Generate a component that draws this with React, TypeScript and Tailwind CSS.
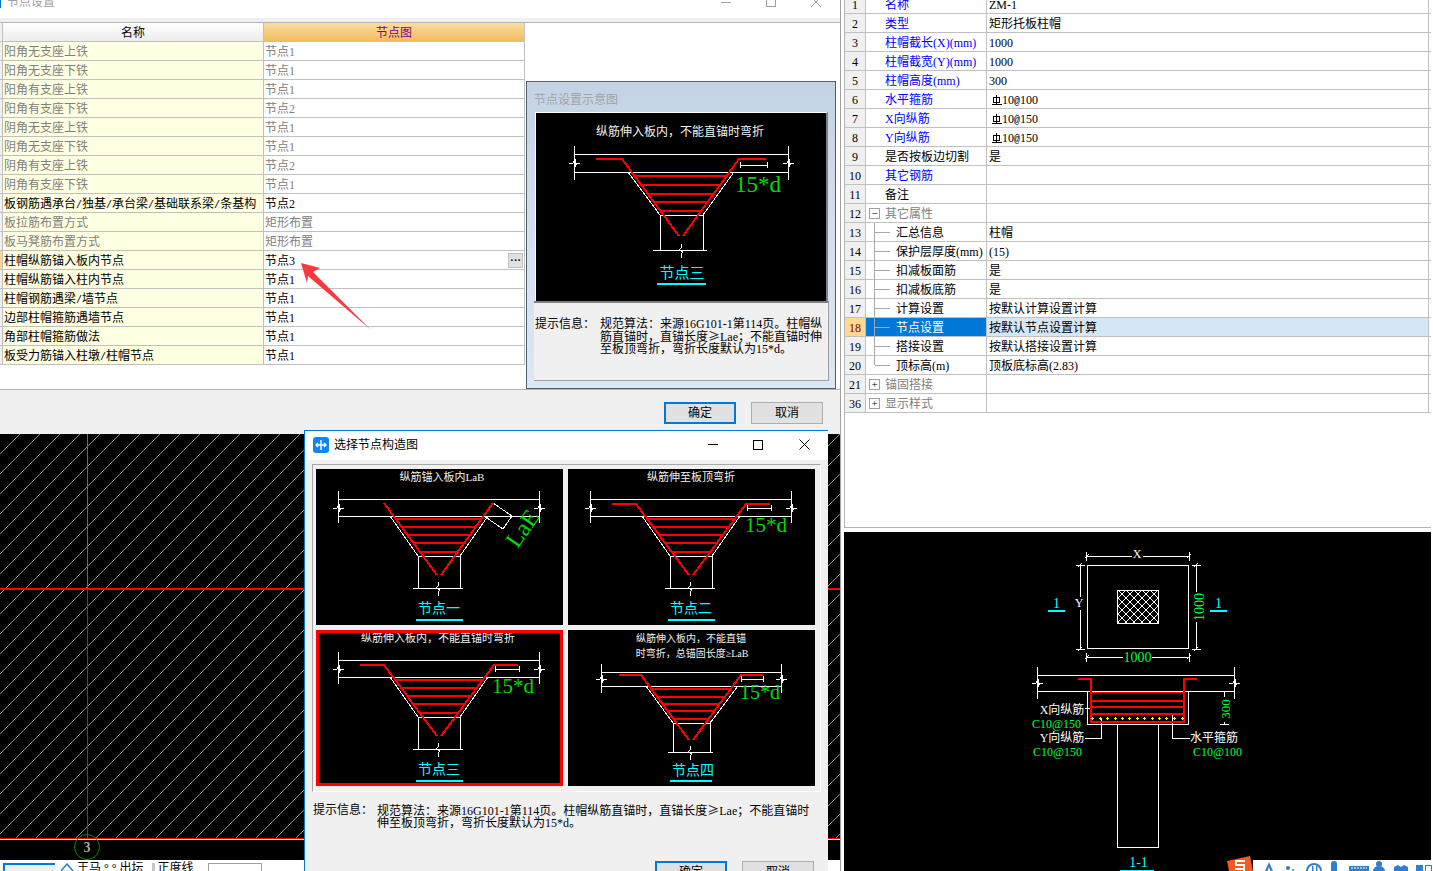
import React from "react";

type Hoop = [number, number, number];

interface Geometry {
  w: number;
  h: number;
  titles: { text: string; x: number; y: number; size: number }[];
  slabTop: number;
  slabBot: number;
  slabL: number;
  slabR: number;
  tickTop: number;
  tickBot: number;
  trapTopL: number;
  trapTopR: number;
  colL: number;
  colR: number;
  colTop: number;
  colBot: number;
  baseL: number;
  baseR: number;
  breakX: number;
  barL: number[];
  barR: number[];
  barY?: number;
  hoops: Hoop[];
  dim?: [number, number, number];
  dimText?: { x: number; y: number; size: number };
  label: string;
  labelX: number;
  labelY: number;
  labelSize: number;
  under: [number, number, number];
  lae?: boolean;
}

const hoopsA: Hoop[] = [
  [50, 79, 166],
  [58, 86, 161],
  [66, 91, 156],
  [74, 97, 150],
  [83, 103, 143],
];

const dialogBase = {
  w: 247,
  h: 156,
  slabTop: 30,
  slabBot: 47,
  slabL: 22,
  slabR: 223,
  tickTop: 22,
  tickBot: 54,
  trapTopL: 74,
  trapTopR: 172,
  colL: 102,
  colR: 144,
  colTop: 87,
  colBot: 119,
  baseL: 97,
  baseR: 147,
  breakX: 122,
  hoops: hoopsA,
  labelX: 123,
  labelY: 139,
  labelSize: 14,
  under: [100, 147, 151] as [number, number, number],
};

const node1: Geometry = {
  ...dialogBase,
  titles: [{ text: "纵筋锚入板内LaB", x: 126, y: 8, size: 11 }],
  barL: [68, 68, 121, 106],
  barR: [177, 177, 125, 106],
  barY: 34,
  label: "节点一",
  lae: true,
};

const node2: Geometry = {
  ...dialogBase,
  titles: [{ text: "纵筋伸至板顶弯折", x: 123, y: 8, size: 11 }],
  barL: [44, 68, 121, 106],
  barR: [202, 178, 125, 106],
  barY: 35,
  dim: [179, 203, 39],
  dimText: { x: 198, y: 56, size: 21 },
  label: "节点二",
};

const node3: Geometry = {
  ...dialogBase,
  titles: [{ text: "纵筋伸入板内，不能直锚时弯折", x: 122, y: 8, size: 11 }],
  barL: [44, 68, 121, 106],
  barR: [202, 178, 125, 106],
  barY: 35,
  dim: [179, 203, 39],
  dimText: { x: 197, y: 56, size: 21 },
  label: "节点三",
};

const node4: Geometry = {
  w: 247,
  h: 156,
  titles: [
    { text: "纵筋伸入板内，不能直锚", x: 123, y: 8, size: 10 },
    { text: "时弯折，总锚固长度≥LaB", x: 124, y: 23, size: 10 },
  ],
  slabTop: 42,
  slabBot: 56,
  slabL: 33,
  slabR: 213,
  tickTop: 34,
  tickBot: 63,
  trapTopL: 78,
  trapTopR: 170,
  colL: 105,
  colR: 142,
  colTop: 93,
  colBot: 122,
  baseL: 100,
  baseR: 145,
  breakX: 122,
  barL: [51, 73, 121, 110],
  barR: [195, 173, 125, 110],
  barY: 45,
  hoops: [
    [59, 83, 163],
    [67, 89, 157],
    [74, 95, 151],
    [81, 100, 146],
    [89, 106, 140],
  ],
  dim: [173, 195, 49],
  dimText: { x: 192, y: 62, size: 20 },
  label: "节点四",
  labelX: 125,
  labelY: 140,
  labelSize: 14,
  under: [102, 144, 151],
};

const bigNode: Geometry = {
  w: 291,
  h: 188,
  titles: [{ text: "纵筋伸入板内，不能直锚时弯折", x: 144, y: 19, size: 12 }],
  slabTop: 41,
  slabBot: 59,
  slabL: 38,
  slabR: 252,
  tickTop: 33,
  tickBot: 67,
  trapTopL: 92,
  trapTopR: 198,
  colL: 124,
  colR: 167,
  colTop: 102,
  colBot: 137,
  baseL: 117,
  baseR: 171,
  breakX: 145,
  barL: [60, 86, 143, 123],
  barR: [230, 203, 147, 123],
  barY: 46,
  hoops: [
    [63, 97, 192],
    [72, 106, 184],
    [81, 112, 179],
    [89, 117, 172],
    [98, 124, 166],
  ],
  dim: [204, 231, 52],
  dimText: { x: 222, y: 71, size: 23 },
  label: "节点三",
  labelX: 146,
  labelY: 160,
  labelSize: 15,
  under: [121, 170, 171],
};

// little break symbol on a dimension line
const breakH = (x: number, y: number) => `M${x - 5} ${y}h4l2 -4v8l2 -4h3`;
const breakV = (x: number, y: number) => `M${x} ${y - 6}v4l-2 2 4 2-2 2v4`;

function NodeDrawing({ g }: { g: Geometry }) {
  const mid = Math.round((g.slabTop + g.slabBot) / 2);
  const barY = g.barY ?? 35;
  return (
    <svg width={g.w} height={g.h} viewBox={`0 0 ${g.w} ${g.h}`} className="block bg-black">
      {g.titles.map((t) => (
        <text key={t.text} x={t.x} y={t.y + 4} fontSize={t.size} fill="#f2f2f2" textAnchor="middle">
          {t.text}
        </text>
      ))}
      <g stroke="#fff" fill="none" shapeRendering="crispEdges">
        <path d={`M${g.slabL} ${g.slabTop + 0.5}H${g.slabR}`} />
        <path d={`M${g.slabL} ${g.slabBot + 0.5}H${g.slabR}`} />
        <path d={`M${g.slabL + 0.5} ${g.tickTop}V${g.tickBot}M${g.slabR + 0.5} ${g.tickTop}V${g.tickBot}`} />
        <path d={breakH(g.slabL, mid)} />
        <path d={breakH(g.slabR, mid)} />
        <path d={`M${g.trapTopL} ${g.slabBot}L${g.colL} ${g.colTop}H${g.colR}L${g.trapTopR} ${g.slabBot}`} />
        <path d={`M${g.colL + 0.5} ${g.colTop}V${g.colBot}M${g.colR + 0.5} ${g.colTop}V${g.colBot}`} />
        <path d={`M${g.baseL} ${g.colBot + 0.5}H${g.baseR}`} />
        <path d={breakV(g.breakX, g.colBot)} />
        {g.dim && (
          <path
            d={`M${g.dim[0]} ${g.dim[2] + 0.5}H${g.dim[1]}M${g.dim[0]} ${g.dim[2] - 3}v6M${g.dim[1]} ${g.dim[2] - 3}v6`}
          />
        )}
        {g.lae && <path d="M177 34L196 47M168 47L187 60M196 47L187 60" />}
      </g>
      <g stroke="#ff0000" strokeWidth={2} fill="none" shapeRendering="crispEdges">
        {g.hoops.map(([y, a, b]) => (
          <path key={y} d={`M${a} ${y}H${b}`} />
        ))}
        <path d={`M${g.barL[0]} ${barY}H${g.barL[1]}L${g.barL[2]} ${g.barL[3]}`} />
        <path d={`M${g.barR[0]} ${barY}H${g.barR[1]}L${g.barR[2]} ${g.barR[3]}`} />
      </g>
      {g.dimText && (
        <text
          x={g.dimText.x}
          y={g.dimText.y + g.dimText.size * 0.35}
          fontSize={g.dimText.size}
          fill="#00dc00"
          textAnchor="middle"
        >
          15*d
        </text>
      )}
      {g.lae && (
        <text x={0} y={0} fontSize={24} fill="#00dc00" textAnchor="middle" transform="translate(213 64) rotate(-55)">
          LaE
        </text>
      )}
      <text x={g.labelX} y={g.labelY + 5} fontSize={g.labelSize} fill="#00ffff" textAnchor="middle">
        {g.label}
      </text>
      <path d={`M${g.under[0]} ${g.under[2]}H${g.under[1]}`} stroke="#00ffff" strokeWidth={2} shapeRendering="crispEdges" />
    </svg>
  );
}

const settingRows: { name: string; value: string; muted?: boolean; active?: boolean }[] = [
  { name: "阳角无支座上铁", value: "节点1", muted: true },
  { name: "阳角无支座下铁", value: "节点1", muted: true },
  { name: "阳角有支座上铁", value: "节点1", muted: true },
  { name: "阳角有支座下铁", value: "节点2", muted: true },
  { name: "阴角无支座上铁", value: "节点1", muted: true },
  { name: "阴角无支座下铁", value: "节点1", muted: true },
  { name: "阴角有支座上铁", value: "节点2", muted: true },
  { name: "阴角有支座下铁", value: "节点1", muted: true },
  { name: "板钢筋遇承台/独基/承台梁/基础联系梁/条基构", value: "节点2" },
  { name: "板拉筋布置方式", value: "矩形布置", muted: true },
  { name: "板马凳筋布置方式", value: "矩形布置", muted: true },
  { name: "柱帽纵筋锚入板内节点", value: "节点3", active: true },
  { name: "柱帽纵筋锚入柱内节点", value: "节点1" },
  { name: "柱帽钢筋遇梁/墙节点", value: "节点1" },
  { name: "边部柱帽箍筋遇墙节点", value: "节点1" },
  { name: "角部柱帽箍筋做法", value: "节点1" },
  { name: "板受力筋锚入柱墩/柱帽节点", value: "节点1" },
];

type PropKind = "blue" | "black" | "group" | "child";

const propRows: { no: number; name: string; value?: string; rebar?: [string, string]; kind: PropKind; open?: boolean }[] = [
  { no: 1, name: "名称", value: "ZM-1", kind: "blue" },
  { no: 2, name: "类型", value: "矩形托板柱帽", kind: "blue" },
  { no: 3, name: "柱帽截长(X)(mm)", value: "1000", kind: "blue" },
  { no: 4, name: "柱帽截宽(Y)(mm)", value: "1000", kind: "blue" },
  { no: 5, name: "柱帽高度(mm)", value: "300", kind: "blue" },
  { no: 6, name: "水平箍筋", rebar: ["10", "100"], kind: "blue" },
  { no: 7, name: "X向纵筋", rebar: ["10", "150"], kind: "blue" },
  { no: 8, name: "Y向纵筋", rebar: ["10", "150"], kind: "blue" },
  { no: 9, name: "是否按板边切割", value: "是", kind: "black" },
  { no: 10, name: "其它钢筋", kind: "blue" },
  { no: 11, name: "备注", kind: "black" },
  { no: 12, name: "其它属性", kind: "group", open: true },
  { no: 13, name: "汇总信息", value: "柱帽", kind: "child" },
  { no: 14, name: "保护层厚度(mm)", value: "(15)", kind: "child" },
  { no: 15, name: "扣减板面筋", value: "是", kind: "child" },
  { no: 16, name: "扣减板底筋", value: "是", kind: "child" },
  { no: 17, name: "计算设置", value: "按默认计算设置计算", kind: "child" },
  { no: 18, name: "节点设置", value: "按默认节点设置计算", kind: "child" },
  { no: 19, name: "搭接设置", value: "按默认搭接设置计算", kind: "child" },
  { no: 20, name: "顶标高(m)", value: "顶板底标高(2.83)", kind: "child" },
  { no: 21, name: "锚固搭接", kind: "group" },
  { no: 36, name: "显示样式", kind: "group" },
];

function RebarMark() {
  return (
    <svg width={11} height={10} viewBox="0 0 11 10" className="ml-[2px] shrink-0">
      <path d="M2.5 2.5H8.5V7H2.5ZM5.5 0V9M0.5 9.5H10.5" stroke="#000" fill="none" shapeRendering="crispEdges" />
    </svg>
  );
}

// slashes take a full half-width cell in the reference font
function Slashed({ text }: { text: string }) {
  const parts = text.split("/");
  return (
    <>
      {parts.map((p, i) => (
        <React.Fragment key={p}>
          {i > 0 && <span className="[font-family:'Liberation_Mono',monospace] text-[10px]">/</span>}
          {p}
        </React.Fragment>
      ))}
    </>
  );
}

function Ge() {
  return <span className="[font-family:'Noto_Sans_CJK_SC',sans-serif]">≥</span>;
}

function PropRow({ row }: { row: (typeof propRows)[number] }) {
  const selected = row.no === 18;
  const first = row.no === 1;
  return (
    <div className={`flex border-b border-[#c0c0c0] ${first ? "h-[14px] items-end overflow-hidden" : "h-[19px]"}`}>
      <div
        className={`flex h-[18px] w-[21px] shrink-0 items-center justify-center border-r border-[#c0c0c0] pt-px text-[12px] ${
          selected ? "bg-[#ffd991] text-[#800000]" : "bg-[#f0f0f0] text-black"
        }`}
      >
        {row.no}
      </div>
      <div
        className={`flex h-[18px] w-[121px] shrink-0 items-center border-r border-[#c0c0c0] text-[12px] whitespace-nowrap ${
          selected ? "bg-[#0078d7] text-white" : ""
        } ${row.kind === "blue" ? "pt-px pl-[19px] text-[#0000ff]" : ""} ${row.kind === "black" ? "pt-px pl-[19px] text-black" : ""}`}
      >
        {row.kind === "group" && (
          <>
            <span className="ml-[3px] flex h-[11px] w-[11px] shrink-0 items-center justify-center border border-[#a0a0a0] text-[11px] leading-none text-black">
              {row.open ? "−" : "+"}
            </span>
            <span className="ml-[5px] pt-px text-[#808080]">{row.name}</span>
          </>
        )}
        {row.kind === "child" && (
          <>
            <span className={`ml-[8px] w-px shrink-0 self-start bg-[#a8a8a8] ${row.no === 20 ? "h-[9px]" : "h-[19px]"}`} />
            <span className="h-px w-[15px] shrink-0 bg-[#a8a8a8]" />
            <span className={`ml-[6px] pt-px ${selected ? "text-white" : "text-black"}`}>{row.name}</span>
          </>
        )}
        {(row.kind === "blue" || row.kind === "black") && row.name}
      </div>
      <div
        className={`flex h-[18px] w-[442px] shrink-0 items-center border-r border-[#c0c0c0] pt-px pl-[2px] text-[12px] whitespace-pre text-black ${
          selected ? "bg-[#d5e6f7]" : ""
        }`}
      >
        {row.value}
        {row.rebar && (
          <>
            <RebarMark />
            <span>
              {row.rebar[0]}
              <span className="[font-family:'Liberation_Mono',monospace] text-[10px]">@</span>
              {row.rebar[1]}
            </span>
          </>
        )}
      </div>
    </div>
  );
}

function DialogButton({ label, primary }: { label: string; primary?: boolean }) {
  return (
    <button
      className={`flex h-[22px] w-[72px] items-center justify-center bg-[#e1e1e1] text-[12px] text-black ${
        primary ? "border-2 border-[#0078d7]" : "border border-[#adadad]"
      }`}
    >
      {label}
    </button>
  );
}

const hatchStarts = Array.from({ length: 64 }, (_, i) => -404 + i * 20);

function CanvasDrawing() {
  return (
    <svg width={840} height={426} viewBox="0 434 840 426" className="block">
      <g stroke="#b0b0b0" strokeWidth={0.8}>
        {hatchStarts.map((x) => (
          <path key={x} d={`M${x} 838L${x + 404} 434`} />
        ))}
      </g>
      <g strokeWidth={1} shapeRendering="crispEdges" fill="none">
        <path d="M87.5 434V588" stroke="#686868" />
        <path d="M87.5 590V838" stroke="#ff0000" />
        <path d="M0 589H840" stroke="#ff0000" strokeWidth={2} />
        <path d="M0 838.5H840" stroke="#ff0000" />
        <path d="M0 839.5H840" stroke="#ffffff" />
      </g>
      <circle cx={87} cy={847} r={12.5} stroke="#0b8a0b" fill="none" />
      <path d="M87 859V860" stroke="#0b8a0b" />
      <text x={87} y={852} fontSize={14} fontWeight={700} fill="#a8a8a8" textAnchor="middle">
        3
      </text>
    </svg>
  );
}

const yellowX = [1092, 1100, 1107, 1115, 1122, 1129, 1137, 1144, 1152, 1159, 1166, 1174, 1182];

function SectionDrawing() {
  const dimTicks = (x: number, y: number) => `M${x - 2} ${y + 2}L${x + 2} ${y - 2}`;
  return (
    <svg width={587} height={339} viewBox="844 532 587 339" className="block bg-black">
      <defs>
        <pattern id="cross" patternUnits="userSpaceOnUse" width={8} height={8} x={1118} y={590}>
          <path d="M0 0L8 8M8 0L0 8" stroke="#fff" strokeWidth={1} />
        </pattern>
      </defs>
      <g stroke="#fff" fill="none" shapeRendering="crispEdges">
        <rect x={1087.5} y={565.5} width={101} height={83} />
        <rect x={1117.5} y={590.5} width={41} height={33} fill="url(#cross)" />
        <path d="M1087 556.5H1132M1143 556.5H1190M1086.5 552V561M1189.5 552V561" />
        <path d={dimTicks(1087, 556) + dimTicks(1189, 556)} />
        <path d="M1080.5 564V597M1080.5 610V650M1076 565H1085M1076 649H1085" />
        <path d={dimTicks(1080, 565) + dimTicks(1080, 649)} />
        <path d="M1196.5 564V592M1196.5 622V650M1192 565H1201M1192 649H1201" />
        <path d={dimTicks(1196, 565) + dimTicks(1196, 649)} />
        <path d="M1087 657.5H1123M1152 657.5H1190M1086.5 653V662M1189.5 653V662" />
        <path d={dimTicks(1087, 657) + dimTicks(1189, 657)} />
        <path d="M1037 675.5H1235M1037 691.5H1235M1037.5 667V699M1234.5 667V699" />
        <path d={breakH(1037, 683) + breakH(1234, 683)} />
        <path d="M1087.5 691V724.5H1188.5V691" />
        <path d="M1117.5 724V847.5H1158.5V724" />
        <path d="M1224.5 691V697M1224.5 722V725M1220 724.5H1229" />
        <path d="M1085 708.5H1091" />
        <path d="M1085 738.5H1101.5V718" />
        <path d="M1190 738.5H1172.5V713" />
      </g>
      <g stroke="#ff0000" strokeWidth={2} fill="none" shapeRendering="crispEdges">
        <path d="M1078 679H1091V722H1184V679H1197" />
        <path d="M1091 701H1184M1091 707H1184M1091 714H1184" />
      </g>
      <path d="M1091 692.5H1184" stroke="#ff0000" strokeWidth={1.5} shapeRendering="crispEdges" />
      <g stroke="#ffff00" shapeRendering="crispEdges">
        {yellowX.map((x) => (
          <path key={x} d={`M${x - 1} 718.5H${x + 2}M${x + 0.5} 717V720`} />
        ))}
      </g>
      <g fontSize={12} textAnchor="middle" fill="#fff">
        <text x={1137} y={558}>X</text>
        <text x={1079} y={607}>Y</text>
        <text x={1062} y={714}>X向纵筋</text>
        <text x={1062} y={742}>Y向纵筋</text>
        <text x={1214} y={742}>水平箍筋</text>
      </g>
      <g fontSize={14} fill="#00ff3c" textAnchor="middle">
        <text x={1137.5} y={662}>1000</text>
        <text transform="translate(1204 607) rotate(-90)">1000</text>
      </g>
      <text transform="translate(1230 709) rotate(-90)" fontSize={13} fill="#00ff3c" textAnchor="middle">
        300
      </text>
      <g fontSize={13} fill="#00ff3c">
        <text x={1032} y={728} textLength={49} lengthAdjust="spacingAndGlyphs">C10@150</text>
        <text x={1033} y={756} textLength={49} lengthAdjust="spacingAndGlyphs">C10@150</text>
        <text x={1193} y={756} textLength={49} lengthAdjust="spacingAndGlyphs">C10@100</text>
      </g>
      <g fontSize={14} fill="#00ffff" textAnchor="middle">
        <text x={1056.5} y={608}>1</text>
        <text x={1218.5} y={608}>1</text>
        <text x={1138.5} y={867}>1-1</text>
      </g>
      <path
        d="M1048 610.5H1065M1210 610.5H1227M1120 870.5H1154"
        stroke="#00ffff"
        strokeWidth={2}
        shapeRendering="crispEdges"
      />
    </svg>
  );
}

function ImeBar() {
  return (
    <div className="absolute right-[1px] bottom-0 flex h-[15px] w-[205px] items-end overflow-hidden">
      <svg width={26} height={15} viewBox="0 0 26 15" className="shrink-0">
        <path d="M0 5L23 0L26 15H2Z" fill="#f25a22" />
        <path d="M18 5H9V9H17V15M8 13H17" stroke="#fff" strokeWidth={2} fill="none" />
      </svg>
      <div className="h-[11px] flex-1 bg-white">
        <svg width={179} height={11} viewBox="1252 860 179 11" className="block">
          <g fill="#2f7fd0">
            <path d="M1268 862L1264 871H1266.5L1268 867L1269.5 871H1272Z" />
            <circle cx={1287} cy={868} r={2} />
            <circle cx={1292} cy={870} r={1} />
            <path d="M1305 871A8 8 0 0 1 1321 871H1319A6 6 0 0 0 1307 871Z" />
            <rect x={1311} y={866} width={1.5} height={5} />
            <rect x={1315} y={866} width={1.5} height={5} />
            <path d="M1330 871V864A3 3 0 0 1 1336 864V871Z" />
            <path d="M1348 866H1368V871H1348Z" />
            <circle cx={1378} cy={864} r={3} />
            <path d="M1372 871A6 5 0 0 1 1384 871Z" />
            <path d="M1393 867L1397 865L1400 867L1403 865L1407 867V871H1393Z" />
            <rect x={1415} y={865} width={7} height={6} />
          </g>
          <rect x={1424.5} y={865.5} width={6} height={6} fill="none" stroke="#2f7fd0" />
          <path d="M1350 868H1366" stroke="#fff" strokeDasharray="2 1" />
        </svg>
      </div>
    </div>
  );
}

export default function App() {
  return (
    <div className="relative flex h-[871px] w-[1433px] overflow-hidden bg-white text-[12px] text-black [font-family:'Liberation_Serif','Noto_Sans_CJK_SC',serif]">
      {/* left window */}
      <div className="flex h-full w-[841px] shrink-0 flex-col border-r border-[#a0a0a0]">
        <div className="flex h-[18px] shrink-0 items-end overflow-hidden bg-white">
          <span className="mb-[10px] h-[8px] w-[1px] self-start bg-[#0078d7]" />
          <span className="relative top-[-9px] ml-[6px] text-[12px] leading-[14px] text-[#a0a0a0]">节点设置</span>
          <div className="relative top-[-11px] ml-auto flex items-center gap-[35px] pr-[19px] text-[#a0a0a0]">
            <span className="h-px w-[10px] bg-[#a0a0a0]" />
            <span className="h-[10px] w-[10px] border border-[#a0a0a0]" />
            <svg width={10} height={10} viewBox="0 0 10 10">
              <path d="M0 0L10 10M10 0L0 10" stroke="#a0a0a0" />
            </svg>
          </div>
        </div>
        <div className="h-[4px] shrink-0 bg-[#f0f0f0]" />
        <div className="flex h-[368px] shrink-0 border-t border-b border-[#b4b4b4] bg-white pr-[4px]">
          <div className="w-[525px] shrink-0">
            <div className="flex h-[19px] border-b border-[#c0c0c0]">
              <div className="w-[3px] border-r border-[#c0c0c0] bg-[#f0f0f0]" />
              <div className="flex w-[261px] items-center justify-center border-r border-[#c0c0c0] bg-gradient-to-b from-white to-[#ececec] pt-px">
                名称
              </div>
              <div className="flex w-[261px] items-center justify-center border-r border-[#c0c0c0] bg-gradient-to-b from-[#fbdc9f] to-[#f3bd5e] pt-px text-[#800080]">
                节点图
              </div>
            </div>
            {settingRows.map((row) => (
              <div key={row.name} className="flex h-[19px] border-b border-[#c0c0c0]">
                <div className={`w-[3px] border-r border-[#c0c0c0] ${row.active ? "bg-[#ffd991]" : "bg-[#f0f0f0]"}`} />
                <div
                  className={`flex w-[261px] items-center overflow-hidden border-r border-[#c0c0c0] bg-[#ffffe1] pt-px pl-[1px] whitespace-pre ${
                    row.muted ? "text-[#808080]" : "text-black"
                  }`}
                >
                  <span>
                    <Slashed text={row.name} />
                  </span>
                </div>
                <div
                  className={`flex w-[261px] items-center justify-between border-r border-[#c0c0c0] pl-[1px] ${
                    row.muted ? "text-[#808080]" : "text-black"
                  }`}
                >
                  <span className="pt-px">{row.value}</span>
                  {row.active && (
                    <span className="mr-[1px] flex h-[15px] w-[15px] items-center justify-center border border-[#c0c0c0] bg-[#e1e1e1] text-[11px] leading-none font-bold">
                      ···
                    </span>
                  )}
                </div>
              </div>
            ))}
          </div>
          {/* preview */}
          <div className="mt-[58px] ml-[1px] h-[308px] w-[310px] shrink-0 border border-[#555e66] bg-gradient-to-b from-[#c3d3e3] via-[#d3e0ee] to-[#dce7f4] px-[7px]">
            <div className="flex h-[30px] items-end pb-[3px] text-[#a3a3a3]">节点设置示意图</div>
            <div className="ml-[1px] h-[189px] w-[293px] overflow-hidden border-t border-l border-white border-r-2 border-r-[#808080]">
              <NodeDrawing g={bigNode} />
            </div>
            <div className="flex h-[80px] w-[295px] items-start border-t-2 border-r border-b border-[#a0a0a0] border-t-[#808080] bg-[#f0f0f0] pt-[15px] pl-[1px] leading-[12px]">
              <span className="w-[65px] shrink-0">提示信息：</span>
              <div className="whitespace-nowrap">
                <div>规范算法：来源16G101-1第114页。柱帽纵</div>
                <div>
                  筋直锚时，直锚长度
                  <Ge />
                  Lae；不能直锚时伸
                </div>
                <div>至板顶弯折，弯折长度默认为15*d。</div>
              </div>
            </div>
          </div>
        </div>
        <div className="flex h-[44px] shrink-0 items-start justify-end gap-[15px] bg-[#f0f0f0] pt-[12px] pr-[17px]">
          <DialogButton label="确定" primary />
          <DialogButton label="取消" />
        </div>
        <div className="h-[426px] shrink-0 bg-black">
          <CanvasDrawing />
        </div>
        <div className="flex h-[11px] flex-1 items-start overflow-hidden bg-white pt-[3px] pl-[3px] text-[12px]">
          <span className="h-[14px] w-[52px] shrink-0 border-t-2 border-l-2 border-[#0078d7] bg-[#e8f2fb]" />
          <svg width={14} height={10} viewBox="0 0 14 10" className="ml-[5px] shrink-0">
            <path d="M1 8L7 1L13 8" fill="none" stroke="#2f7fd0" strokeWidth={1.5} />
          </svg>
          <span className="ml-[3px] shrink-0 leading-[10px] whitespace-nowrap">王马 ° ° 出坛</span>
          <span className="ml-[8px] h-[8px] w-[3px] shrink-0 bg-[#c8c8c8]" />
          <span className="ml-[3px] shrink-0 leading-[10px] whitespace-nowrap">正度线</span>
          <span className="ml-[14px] h-[14px] w-[54px] shrink-0 border border-[#a0a0a0]" />
        </div>
      </div>

      {/* right panel */}
      <div className="flex h-full flex-1 flex-col pr-[2px] pl-[3px]">
        <div className="h-[528px] shrink-0 border-b border-l border-[#b4b4b4]">
          {propRows.map((row) => (
            <PropRow key={row.no} row={row} />
          ))}
        </div>
        <div className="mt-[4px] flex-1 overflow-hidden">
          <SectionDrawing />
        </div>
      </div>
      <ImeBar />

      {/* red annotation arrow */}
      <svg width={80} height={76} viewBox="296 258 80 76" className="absolute top-[258px] left-[296px]">
        <path d="M301 263L320 268L313 272L371 330L308 276L307 283Z" fill="#f83a3a" />
      </svg>

      {/* floating dialog */}
      <div className="absolute top-[430px] left-[304px] flex h-[441px] w-[524px] flex-col overflow-hidden border-t border-l border-[#0078d7] bg-white">
        <div className="flex h-[29px] shrink-0 items-center pb-[2px] pl-[8px]">
          <span className="flex h-[16px] w-[16px] items-center justify-center rounded-[3px] bg-[#0d86f0]">
            <svg width={12} height={12} viewBox="0 0 12 12">
              <path d="M6 1V11M1 6H11M3 4L1 6L3 8M9 4L11 6L9 8" stroke="#fff" strokeWidth={1.4} fill="none" />
            </svg>
          </span>
          <span className="ml-[5px] text-[12px]">选择节点构造图</span>
          <div className="ml-auto flex items-center">
            <span className="mr-[35px] h-px w-[10px] bg-black" />
            <span className="mr-[36px] h-[10px] w-[10px] border border-black" />
            <svg width={11} height={11} viewBox="0 0 11 11" className="mr-[18px]">
              <path d="M0.5 0.5L10.5 10.5M10.5 0.5L0.5 10.5" stroke="#000" />
            </svg>
          </div>
        </div>
        <div className="flex-1 bg-[#f0f0f0] pt-[4px] pl-[7px]">
          <div className="grid h-[328px] w-[509px] grid-cols-[247px_247px] content-start gap-[5px] border border-[#a8a8a8] border-r-white border-b-white pt-[4px] pl-[3px]">
            <NodeDrawing g={node1} />
            <NodeDrawing g={node2} />
            <div className="relative h-[156px] w-[247px]">
              <NodeDrawing g={node3} />
              <span className="absolute inset-0 border-[3px] border-[#ff0000]" />
            </div>
            <NodeDrawing g={node4} />
          </div>
          <div className="mt-[12px] flex leading-[12px]">
            <span className="ml-[1px] w-[64px] shrink-0">提示信息：</span>
            <div className="whitespace-nowrap">
              <div>
                规范算法：来源16G101-1第114页。柱帽纵筋直锚时，直锚长度
                <Ge />
                Lae；不能直锚时
              </div>
              <div>伸至板顶弯折，弯折长度默认为15*d。</div>
            </div>
          </div>
          <div className="mt-[32px] flex gap-[15px] pl-[343px]">
            <DialogButton label="确定" primary />
            <DialogButton label="取消" />
          </div>
        </div>
      </div>
    </div>
  );
}
